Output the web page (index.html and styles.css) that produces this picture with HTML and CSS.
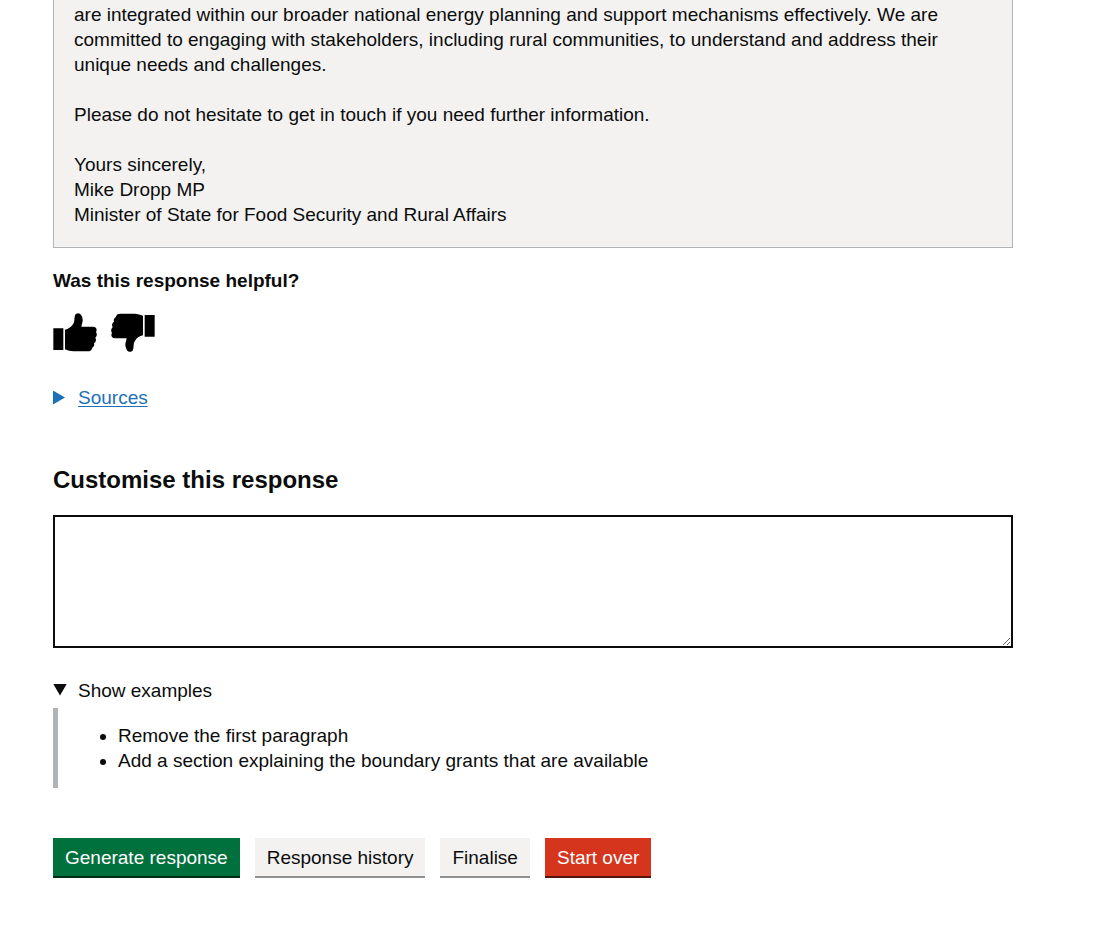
FILE: index.html
```html
<!DOCTYPE html>
<html lang="en">
<head>
<meta charset="utf-8">
<meta name="viewport" content="width=device-width, initial-scale=1">
<title>Customise this response</title>
<link rel="stylesheet" href="styles.css">
</head>
<body class="page">
<main class="container">
  <section class="letter">
    <p class="letter-paragraph">are integrated within our broader national energy planning and support mechanisms effectively. We are committed to engaging with stakeholders, including rural communities, to understand and address their unique needs and challenges.</p>
    <p class="letter-paragraph">Please do not hesitate to get in touch if you need further information.</p>
    <p class="letter-paragraph">Yours sincerely,<br>Mike Dropp MP<br>Minister of State for Food Security and Rural Affairs</p>
  </section>

  <h2 class="heading-small">Was this response helpful?</h2>
  <div class="feedback">
    <button class="thumb" type="button" aria-label="Yes, helpful">
      <svg class="thumb-icon" viewBox="24 24 132 117" aria-hidden="true">
        <path d="M25 70H55V135H25Z M60 74C70 72 78 67 84 58C90 50 87 40 90 31C93 23 105 23 109 31C114 40 114 48 111 56L109 65H144C155 65 157 75 153 81C157 87 156 94 151 98C155 105 152 112 147 115C149 121 146 126 142 128C140 136 136 139 127 139H85C76 139 68 136 60 133Z"/>
      </svg>
    </button>
    <button class="thumb" type="button" aria-label="No, not helpful">
      <svg class="thumb-icon thumb-icon-down" viewBox="24 24 132 117" aria-hidden="true">
        <path d="M25 70H55V135H25Z M60 74C70 72 78 67 84 58C90 50 87 40 90 31C93 23 105 23 109 31C114 40 114 48 111 56L109 65H144C155 65 157 75 153 81C157 87 156 94 151 98C155 105 152 112 147 115C149 121 146 126 142 128C140 136 136 139 127 139H85C76 139 68 136 60 133Z"/>
      </svg>
    </button>
  </div>

  <details class="details sources">
    <summary class="summary summary-link"><span class="summary-text">Sources</span></summary>
  </details>

  <label class="heading-medium" for="customise">Customise this response</label>
  <textarea class="textarea" id="customise" name="customise"></textarea>

  <details class="details examples" open>
    <summary class="summary"><span>Show examples</span></summary>
    <div class="details-body">
      <ul class="example-list">
        <li>Remove the first paragraph</li>
        <li>Add a section explaining the boundary grants that are available</li>
      </ul>
    </div>
  </details>

  <div class="button-group">
    <button class="button" type="submit">Generate response</button>
    <button class="button button-secondary" type="button">Response history</button>
    <button class="button button-secondary" type="button">Finalise</button>
    <button class="button button-warning" type="button">Start over</button>
  </div>
</main>
</body>
</html>
```

FILE: styles.css
```css
* {
  box-sizing: border-box;
}

.page {
  margin: 0;
  padding: 0 36px 0 0;
  background: #fff;
  color: #0b0c0c;
  font-family: "Liberation Sans", Arial, sans-serif;
  font-size: 19px;
  line-height: 25px;
}

.container {
  max-width: 960px;
  margin: 0 auto;
  padding-bottom: 49px;
}

.letter {
  display: flex;
  flex-direction: column;
  gap: 25px;
  padding: 2px 20px 20px;
  border: 1px solid #b1b4b6;
  border-top: 0;
  background: #f3f2f1;
}

.letter-paragraph {
  margin: 0;
}

.heading-small {
  margin: 20px 0;
  font-size: 19px;
  line-height: 25px;
}

.feedback {
  display: flex;
  gap: 14px;
}

.thumb {
  padding: 0;
  border: 0;
  background: none;
  color: #000;
  cursor: pointer;
}

.thumb-icon {
  display: block;
  width: 44px;
  height: 39px;
  fill: currentColor;
}

.thumb-icon-down {
  transform: rotate(180deg);
}

.summary {
  display: flex;
  align-items: center;
  gap: 11px;
  width: fit-content;
  list-style: none;
  cursor: pointer;
}

.summary::-webkit-details-marker {
  display: none;
}

.summary::before {
  content: "";
  width: 14px;
  height: 14px;
  background: currentColor;
  clip-path: polygon(0 0, 12px 7px, 0 14px);
}

.details[open] .summary::before {
  clip-path: polygon(0 0, 14px 0, 7px 12px);
}

.summary-link {
  color: #1d70b8;
}

.summary-text {
  text-decoration: underline;
  text-decoration-thickness: 1px;
  text-underline-offset: 2px;
}

.sources {
  margin: 33px 0 55px;
}

.heading-medium {
  display: block;
  margin-bottom: 20px;
  font-size: 24px;
  font-weight: 700;
  line-height: 30px;
}

.textarea {
  display: block;
  width: 100%;
  height: 133px;
  padding: 5px;
  border: 2px solid #0b0c0c;
  border-radius: 0;
  background: #fff;
  color: inherit;
  font: inherit;
  resize: vertical;
}

.examples {
  margin: 30px 0 50px;
}

.details-body {
  margin-top: 5px;
  padding: 15px 20px;
  border-left: 5px solid #b1b4b6;
}

.example-list {
  margin: 0;
  padding-left: 40px;
}

.button-group {
  display: flex;
  flex-wrap: wrap;
  gap: 15px;
}

.button {
  height: 40px;
  padding: 0 12px 2px;
  border: 0;
  background: #00703c;
  box-shadow: inset 0 -2px 0 #002d18;
  color: #fff;
  font: inherit;
  cursor: pointer;
}

.button-secondary {
  background: #f3f2f1;
  box-shadow: inset 0 -2px 0 #929191;
  color: #0b0c0c;
}

.button-warning {
  background: #d4351c;
  box-shadow: inset 0 -2px 0 #55150b;
}
```
